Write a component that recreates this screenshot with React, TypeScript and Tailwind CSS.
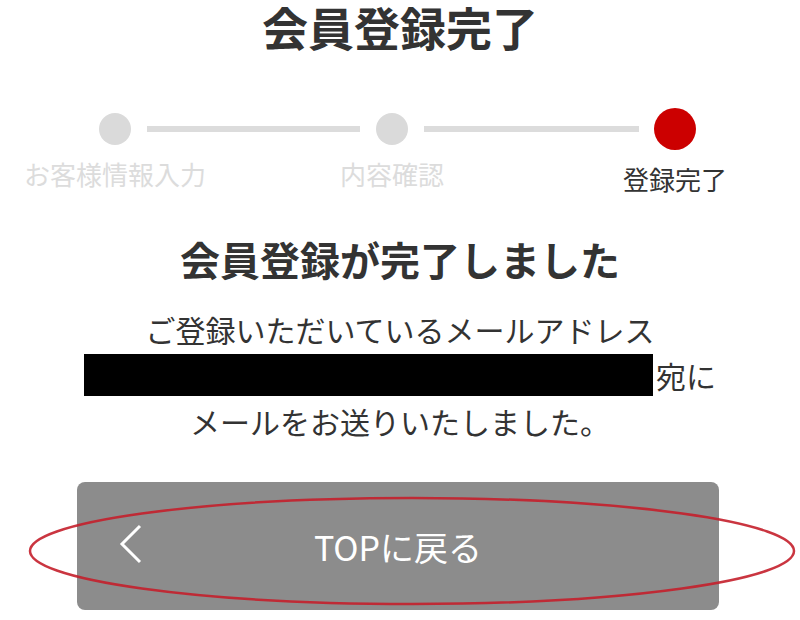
import React from 'react';

const steps = [
  { label: 'お客様情報入力', done: false },
  { label: '内容確認', done: false },
  { label: '登録完了', done: true },
];

function StepCell({ label, active }: { label: string; active: boolean }) {
  return (
    <div className="flex flex-col items-center">
      {active ? (
        <div className="w-[42px] h-[42px] rounded-full bg-[#cc0000]" />
      ) : (
        <div className="mt-[5px] w-[32px] h-[32px] rounded-full bg-[#dadada]" />
      )}
      <div
        className={`mt-[14px] flex justify-center whitespace-nowrap text-[26px] leading-[30px] ${
          active ? 'text-[#333333]' : 'text-[#dcdcdc]'
        }`}
      >
        {label}
      </div>
    </div>
  );
}

function StepLine() {
  return <div className="mt-[18px] h-[6px] bg-[#dcdcdc]" />;
}

export default function App() {
  return (
    <div
      className="relative w-[800px] h-[620px] overflow-hidden bg-white text-[#333333]"
      style={{ fontFamily: '"Noto Sans CJK JP", "Noto Sans", sans-serif' }}
    >
      <h1 className="pt-[2px] text-center text-[46px] font-bold leading-[48px]">会員登録完了</h1>

      {/* ステップ表示 */}
      <div className="mt-[58px] ml-[98px] grid grid-cols-[34px_213px_34px_215px_42px] gap-x-[15px] items-start">
        <StepCell label={steps[0].label} active={false} />
        <StepLine />
        <StepCell label={steps[1].label} active={false} />
        <StepLine />
        <StepCell label={steps[2].label} active={true} />
      </div>

      <h2 className="mt-[39px] text-center text-[40px] font-bold leading-[52px]">会員登録が完了しました</h2>

      <div className="mt-[21px] text-center text-[30px] leading-[46px]">
        <p>ご登録いただいているメールアドレス</p>
        <div className="flex h-[46px] items-center justify-center">
          <span className="w-[569px] h-[42px] bg-black" />
          <span className="ml-[3px]">宛に</span>
        </div>
        <p>メールをお送りいたしました。</p>
      </div>

      <button className="mt-[38px] ml-[77px] w-[642px] h-[128px] rounded-[8px] bg-[#8c8c8c] flex items-center relative">
        <svg className="ml-[42px] -mt-[4px]" width="24" height="40" viewBox="0 0 24 40" fill="none">
          <polyline points="21,2 3,20 21,38" stroke="white" strokeWidth="3" strokeLinejoin="miter" />
        </svg>
        <span className="absolute inset-0 flex items-center justify-center text-white text-[34px]">TOPに戻る</span>
      </button>

      {/* 赤い丸囲み */}
      <svg className="absolute inset-0 pointer-events-none" width="800" height="620" viewBox="0 0 800 620">
        <ellipse cx="412" cy="551" rx="382" ry="53" fill="none" stroke="#c41f2b" strokeWidth="2.5" opacity="0.9" />
      </svg>
    </div>
  );
}
